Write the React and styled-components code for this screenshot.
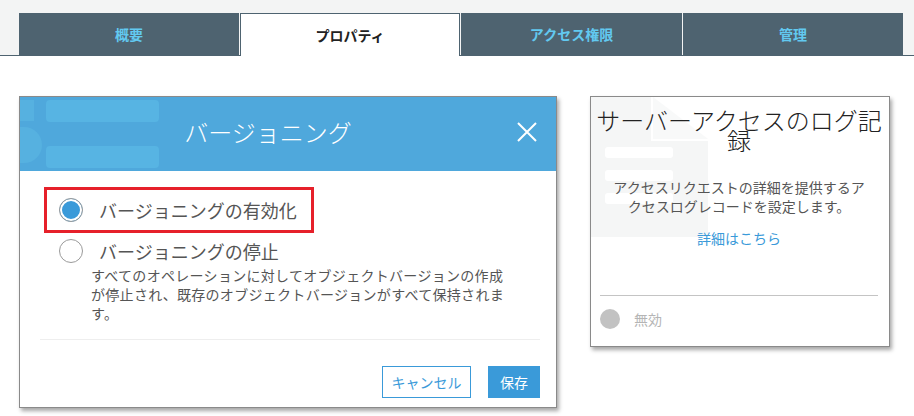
import React from 'react';
import styled, { createGlobalStyle } from 'styled-components';

const GlobalStyle = createGlobalStyle`
  html, body {
    margin: 0;
    padding: 0;
    background: #ffffff;
    font-family: "Noto Sans CJK JP", "Noto Sans", sans-serif;
  }
`;

const Page = styled.div`
  width: 914px;
  height: 416px;
  overflow: hidden;
  background: #ffffff;
`;

const TabBar = styled.nav`
  display: flex;
  padding: 13px 0 0 19px;
  background: #f3f4f4;
  border-bottom: 1px solid #4e6370;
  height: 42px;
`;

const Tab = styled.div`
  width: ${(p) => p.$w}px;
  height: ${(p) => (p.$active ? 43 : 42)}px;
  box-sizing: border-box;
  display: flex;
  align-items: center;
  justify-content: center;
  font-size: 14px;
  font-weight: 700;
  margin-right: 1px;
  background: ${(p) => (p.$active ? '#ffffff' : '#4e6370')};
  color: ${(p) => (p.$active ? '#222222' : '#62c9f0')};
  border: ${(p) => (p.$active ? '1px solid #4e6370' : 'none')};
  border-bottom: none;
  position: relative;
  z-index: 1;
`;

const Content = styled.main`
  display: flex;
  align-items: flex-start;
  gap: 33px;
  padding: 40px 0 0 19px;
`;

const Modal = styled.section`
  width: 538px;
  box-sizing: border-box;
  border: 1px solid #8a8a8a;
  background: #ffffff;
  box-shadow: 2px 3px 4px rgba(0, 0, 0, 0.35);
  padding-bottom: 9px;
`;

const ModalHeader = styled.header`
  position: relative;
  display: flex;
  align-items: center;
  height: 74px;
  background: #4fa8dc;
  overflow: hidden;
`;

const HeaderArt = styled.svg`
  position: absolute;
  left: 0;
  top: 0;
`;

const ModalTitle = styled.h2`
  position: relative;
  flex: 1;
  margin: 0 0 6px;
  text-align: center;
  font-size: 24px;
  font-weight: 300;
  color: #ffffff;
`;

const CloseButton = styled.button`
  position: relative;
  width: 22px;
  height: 22px;
  margin: 0 18px 4px 0;
  padding: 0;
  border: none;
  background: none;
  display: flex;
  align-items: center;
  justify-content: center;
`;

const ModalBody = styled.div`
  padding: 16px 16px 0 24px;
`;

const Option = styled.label`
  display: flex;
  align-items: center;
  gap: 16px;
  box-sizing: border-box;
  width: ${(p) => (p.$highlight ? '270px' : 'auto')};
  height: ${(p) => (p.$highlight ? '46px' : 'auto')};
  padding-left: ${(p) => (p.$highlight ? '12px' : '15px')};
  border: ${(p) => (p.$highlight ? '3px solid #e6202a' : 'none')};
  font-size: 18px;
  color: #555555;
`;

const Radio = styled.span`
  flex: none;
  width: 24px;
  height: 24px;
  box-sizing: border-box;
  border-radius: 50%;
  border: 1px solid #9a9a9a;
  background: ${(p) => (p.$checked ? '#3a9ad9' : '#ffffff')};
  box-shadow: ${(p) => (p.$checked ? 'inset 0 0 0 2px #ffffff' : 'none')};
`;

const OptionGroup = styled.div`
  margin-top: 5px;
`;

const OptionNote = styled.p`
  margin: 2px 0 0 47px;
  font-size: 14px;
  letter-spacing: 0.3px;
  line-height: 19px;
  color: #555555;
  width: 420px;
`;

const Divider = styled.hr`
  margin: 16px 0 0 -4px;
  border: none;
  border-top: 1px solid #eeeeee;
`;

const Actions = styled.div`
  display: flex;
  justify-content: flex-end;
  gap: 17px;
  margin-top: 26px;
`;

const Button = styled.button`
  width: ${(p) => (p.$primary ? '52px' : '89px')};
  height: 32px;
  box-sizing: border-box;
  padding: 0;
  font-family: inherit;
  font-size: 14px;
  border: 1px solid #3a9ad9;
  background: ${(p) => (p.$primary ? '#3a9ad9' : '#ffffff')};
  color: ${(p) => (p.$primary ? '#ffffff' : '#3a9ad9')};
`;

const Card = styled.aside`
  position: relative;
  width: 300px;
  height: 251px;
  box-sizing: border-box;
  border: 1px solid #8a8a8a;
  background: #ffffff;
  box-shadow: 2px 3px 4px rgba(0, 0, 0, 0.35);
  padding: 13px 11px 0 9px;
  display: flex;
  flex-direction: column;
  align-items: center;
  overflow: hidden;
`;

const CardArt = styled.svg`
  position: absolute;
  left: 0;
  top: 0;
`;

const CardTitle = styled.h3`
  position: relative;
  margin: 0 -6px;
  font-size: 24px;
  font-weight: 300;
  line-height: 20px;
  color: #222222;
  text-align: center;
`;

const CardText = styled.p`
  position: relative;
  margin: 28px 0 0;
  font-size: 14px;
  line-height: 19px;
  color: #555555;
  text-align: center;
  width: 258px;
`;

const CardLink = styled.a`
  position: relative;
  margin-top: 12px;
  font-size: 14px;
  color: #3a9ad9;
  text-decoration: none;
`;

const CardFooter = styled.div`
  align-self: stretch;
  margin: 47px 0 0;
  border-top: 1px solid #c4c4c4;
  display: flex;
  align-items: center;
  gap: 14px;
  padding: 13px 0 0 0;
`;

const Dot = styled.span`
  width: 20px;
  height: 20px;
  border-radius: 50%;
  background: #c2c2c2;
`;

const FooterLabel = styled.span`
  font-size: 14px;
  color: #b5b5b5;
`;

const tabs = [
  { label: '概要', w: 220 },
  { label: 'プロパティ', w: 220, active: true },
  { label: 'アクセス権限', w: 221 },
  { label: '管理', w: 220 },
];

export default function App() {
  return (
    <Page>
      <GlobalStyle />
      <TabBar>
        {tabs.map((t) => (
          <Tab key={t.label} $w={t.w} $active={t.active}>
            {t.label}
          </Tab>
        ))}
      </TabBar>

      <Content>
        <Modal>
          <ModalHeader>
            <HeaderArt width="200" height="74" viewBox="0 0 200 74">
              <rect x="26" y="3" width="113" height="22" rx="4" fill="#57b4e3" />
              <rect x="26" y="49" width="113" height="22" rx="4" fill="#57b4e3" />
              <rect x="0" y="3" width="14" height="21" fill="#56b1e0" />
              <path d="M0 30 h4 a18 18 0 0 1 0 36 h-4 z" fill="#56b1e0" />
            </HeaderArt>
            <ModalTitle>バージョニング</ModalTitle>
            <CloseButton aria-label="閉じる">
              <svg width="20" height="20" viewBox="0 0 20 20">
                <path d="M1 1 L19 19 M19 1 L1 19" stroke="#ffffff" strokeWidth="2" />
              </svg>
            </CloseButton>
          </ModalHeader>

          <ModalBody>
            <Option $highlight>
              <Radio $checked />
              バージョニングの有効化
            </Option>
            <OptionGroup>
              <Option>
                <Radio />
                バージョニングの停止
              </Option>
              <OptionNote>
                すべてのオペレーションに対してオブジェクトバージョンの作成が停止され、既存のオブジェクトバージョンがすべて保持されます。
              </OptionNote>
            </OptionGroup>
            <Divider />
            <Actions>
              <Button>キャンセル</Button>
              <Button $primary>保存</Button>
            </Actions>
          </ModalBody>
        </Modal>

        <Card>
          <CardArt width="130" height="150" viewBox="0 0 130 150">
            <path d="M0 0 H60 V44 H117 V140 H0 Z" fill="#f5f6f6" />
            <path d="M62 0 L117 42 H62 Z" fill="#f8f9f9" />
            <rect x="14" y="50" width="68" height="11" rx="3" fill="#ffffff" />
            <rect x="14" y="73" width="68" height="11" rx="3" fill="#ffffff" />
            <rect x="14" y="96" width="68" height="11" rx="3" fill="#ffffff" />
          </CardArt>
          <CardTitle>サーバーアクセスのログ記録</CardTitle>
          <CardText>アクセスリクエストの詳細を提供するアクセスログレコードを設定します。</CardText>
          <CardLink href="#">詳細はこちら</CardLink>
          <CardFooter>
            <Dot />
            <FooterLabel>無効</FooterLabel>
          </CardFooter>
        </Card>
      </Content>
    </Page>
  );
}
